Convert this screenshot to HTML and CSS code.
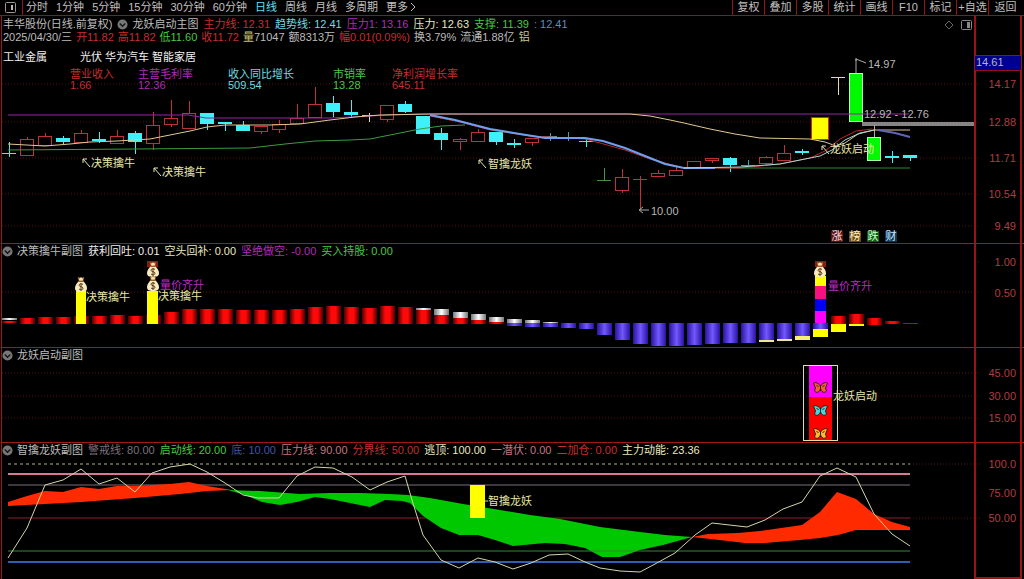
FILE: index.html
```html
<!DOCTYPE html>
<html lang="zh-CN">
<head>
    <meta charset="UTF-8">
    <meta name="viewport" content="width=device-width, initial-scale=1.0">
    <title>丰华股份 日线</title>
    <link rel="stylesheet" href="styles.css">
</head>
<body>
    <!-- shared symbols and gradients -->
    <svg class="defs" width="0" height="0" aria-hidden="true">
        <defs>
            <linearGradient id="redBar"><stop offset="0" stop-color="#500000"/><stop offset=".35" stop-color="#ff0808"/><stop offset=".65" stop-color="#ff0808"/><stop offset="1" stop-color="#500000"/></linearGradient>
            <linearGradient id="purpleBar"><stop offset="0" stop-color="#2c12a0"/><stop offset=".5" stop-color="#7058ff"/><stop offset="1" stop-color="#2c12a0"/></linearGradient>
            <linearGradient id="whiteBar"><stop offset="0" stop-color="#777"/><stop offset=".5" stop-color="#fff"/><stop offset="1" stop-color="#777"/></linearGradient>
            <symbol id="bag" viewBox="0 0 12 15">
                <path d="M3 0l1.500 1L6 0l1.500 1L9 0 8 4H4z" fill="#f4e2a8" stroke="#7a4a20" stroke-width=".6"/>
                <path d="M4 4h4c2 2 4 4 4 7 0 3-2 4-6 4s-6-1-6-4c0-3 2-5 4-7z" fill="#f7ecc0"/>
                <path d="M3.500 4.500h5" stroke="#9a5a20"/>
                <path d="M8 7.500C7 6.500 4 6.500 4 8.300S8 9.300 8 11.200 5 13 4 12M6 6v8" fill="none" stroke="#5a3a18"/>
            </symbol>
            <symbol id="butterfly" viewBox="0 0 14 11">
                <path d="M7 4C5 1 2 0 0 1l2 5-1 3c2 2 4 2 6-2 2 4 4 4 6 2l-1-3 2-5c-2-1-5 0-7 3z" fill="currentColor" stroke="#33200c"/>
                <path d="M7 3v6M3 3l2 2M11 3L9 5" stroke="#33200c" fill="none"/>
            </symbol>
            <symbol id="pointer" viewBox="0 0 9 10">
                <path d="M8 9L1 1M1 5V1h4" fill="none" stroke="#e6e6b4"/>
            </symbol>
            <symbol id="chevron" viewBox="0 0 12 12">
                <circle cx="6" cy="6" r="5.500" fill="#777"/>
                <path d="M3 5l3 3 3-3" fill="none" stroke="#161616" stroke-width="1.500"/>
            </symbol>
        </defs>
    </svg>

    <header class="toolbar">
        <button class="layout-btn" aria-label="布局"><svg width="12" height="11" viewBox="0 0 12 11"><rect x=".5" y=".5" width="10" height="10" rx="1" fill="none" stroke="#999"/><path d="M7 3v5" stroke="#bbb" stroke-width="2"/></svg></button>
        <nav class="periods">
            <button>分时</button>
            <button>1分钟</button>
            <button>5分钟</button>
            <button>15分钟</button>
            <button>30分钟</button>
            <button>60分钟</button>
            <button class="active">日线</button>
            <button>周线</button>
            <button>月线</button>
            <button>多周期</button>
            <button>更多<svg width="8" height="8" viewBox="0 0 8 8"><path d="M3 0l4 4-4 4" fill="none" stroke="#bbb"/></svg></button>
        </nav>
        <div class="tools">
            <button>复权</button>
            <button>叠加</button>
            <button>多股</button>
            <button>统计</button>
            <button>画线</button>
            <button>F10</button>
            <button>标记</button>
            <button>+自选</button>
            <button>返回</button>
        </div>
    </header>

    <main>
        <section class="panel">
            <svg class="chart" id="main" viewBox="0 16 1024 227">
                <g class="grid"><path d="M2 84H980M2 122H980M2 158H980M2 194H980M2 226H980"/></g>
                <rect x="862" y="122" width="112" height="4" fill="#858585"/>
                <g class="candles"></g>
                <g class="lines">
                    <path stroke="#9a22a8" d="M8 115H188L206 118H330L390 115 420 114H909"/>
                    <path stroke="#3c9c3c" d="M8 150L135 149 250 148 285 144 315 141 350 140 370 139 395 134 420 129 441 126 465 125"/>
                    <path stroke="#2a8a2a" d="M684 168H910"/>
                    <path stroke="#e0c890" d="M8 144L45 146 70 144 90 142 117 141 150 139 170 135 190 131 207 127 225 125 270 125 300 124 330 120 355 117 380 115 430 114H630L650 116 670 120 684 123 710 129 735 134 760 138 810 139 825 142 836 146 845 143 858 134 874 130H910"/>
                    <path stroke="#c02828" d="M430 116L460 122 490 130 530 136 585 139 600 143 625 150 650 159 684 168 740 168 780 164 810 158 825 151 840 139 856 131 872 129"/>
                    <path stroke="#6fa0f0" stroke-width="2" d="M430 115L455 120 490 129 520 134 545 138 585 138 603 141 625 148 645 156 665 164 684 168H715"/>
                    <path stroke="#a8d8d8" d="M684 168L740 167 780 164 800 160 820 156 832 150 845 140 860 133 874 130"/>
                    <path stroke="#6264b8" stroke-width="2" d="M878 130L895 133 910 137"/>
                </g>
                <g class="marks">
                    <path d="M856 58V73M856 61V59L866 63M640 210H649M639 210L643 207M639 210L643 213" fill="none" stroke="#aaa"/>
                    <text class="plain" x="868" y="68">14.97</text>
                    <text class="plain" x="864" y="118">12.92 - 12.76</text>
                    <text class="plain" x="651" y="215">10.00</text>
                    <use href="#pointer" x="82" y="158" width="9" height="10"/>
                    <text x="91" y="167">决策擒牛</text>
                    <use href="#pointer" x="153" y="167" width="9" height="10"/>
                    <text x="162" y="176">决策擒牛</text>
                    <use href="#pointer" x="478" y="159" width="9" height="10"/>
                    <text x="488" y="168">智擒龙妖</text>
                    <use href="#pointer" x="821" y="145" width="9" height="10"/>
                    <text x="830" y="153">龙妖启动</text>
                </g>
                <g class="badges">
                    <rect x="831" y="231" width="12" height="11" fill="#5a1010"/><text x="837" y="240" fill="#ffe0e0">涨</text>
                    <rect x="849" y="231" width="12" height="11" fill="#6a4a18"/><text x="855" y="240" fill="#fff0c0">榜</text>
                    <rect x="867" y="231" width="12" height="11" fill="#0c5c14"/><text x="873" y="240" fill="#c8ffc8">跌</text>
                    <rect x="885" y="231" width="12" height="11" fill="#0c3454"/><text x="891" y="240" fill="#c8e8ff">财</text>
                </g>
                <g class="frame"><path d="M975 16V243M1021 16V243"/></g>
                <rect x="975" y="56" width="46" height="14" fill="#000090"/>
                <path d="M975 55.500H1021M975 70.500H1021" stroke="#901020"/>
                <text class="plain" x="976" y="66">14.61</text>
                <g class="axis">
                    <text x="1016" y="88">14.17</text>
                    <text x="1016" y="126">12.88</text>
                    <text x="1016" y="162">11.71</text>
                    <text x="1016" y="198">10.54</text>
                    <text x="1016" y="230">9.49</text>
                </g>
                <path d="M949 21L953 25 949 29 945 25Z" fill="none" stroke="#666"/>
                <rect x="961.500" y="20.500" width="10" height="9" rx="1" fill="none" stroke="#888"/>
                <rect x="967" y="22" width="3" height="6" fill="#888"/>
            </svg>
            <div class="legend main-legend">
                <div class="row">
                    <span class="grey">丰华股份(日线.前复权)</span>
                    <svg class="chev"><use href="#chevron"/></svg>
                    <span class="grey">龙妖启动主图</span>
                    <span class="red">主力线: 12.31</span>
                    <span class="cyan">趋势线: 12.41</span>
                    <span class="magenta">压力1: 13.16</span>
                    <span class="cream">压力: 12.63</span>
                    <span class="green">支撑: 11.39</span>
                    <span class="blue">: 12.41</span>
                </div>
                <div class="row quote">
                    <span class="grey">2025/04/30/三</span>
                    <span class="red">开11.82</span>
                    <span class="red">高11.82</span>
                    <span class="green">低11.60</span>
                    <span class="red">收11.72</span>
                    <span class="grey"><b>量</b>71047</span>
                    <span class="grey">额8313万</span>
                    <span class="red">幅0.01(0.09%)</span>
                    <span class="grey">换3.79%</span>
                    <span class="grey">流通1.88亿</span>
                    <span class="khaki">铝</span>
                </div>
                <div class="row sector">
                    <span>工业金属</span>
                    <span>光伏 华为汽车 智能家居</span>
                </div>
                <dl class="figures">
                    <div class="red"><dt>营业收入</dt><dd>1.66</dd></div>
                    <div class="magenta"><dt>主营毛利率</dt><dd>12.36</dd></div>
                    <div class="cyan"><dt>收入同比增长</dt><dd>509.54</dd></div>
                    <div class="green"><dt>市销率</dt><dd>13.28</dd></div>
                    <div class="red"><dt>净利润增长率</dt><dd>645.11</dd></div>
                </dl>
            </div>
        </section>

        <section class="panel">
            <svg class="chart" id="volume" viewBox="0 244 1024 103">
                <g class="grid"><path d="M2 292H980M975 262H980"/></g>
                <g class="bars"></g>
                <g class="signals">
                    <rect x="76" y="291" width="10" height="33" fill="#ff0"/>
                    <rect x="147" y="291" width="11" height="33" fill="#ff0"/>
                    <rect x="147" y="261" width="11" height="6" fill="#8a1c10"/>
                    <rect x="815" y="261" width="11" height="6" fill="#8a1c10"/>
                    <rect x="815" y="276" width="11" height="10" fill="#ff0"/>
                    <rect x="815" y="286" width="11" height="13" fill="#f81080"/>
                    <rect x="815" y="299" width="11" height="12" fill="#0000f0"/>
                    <rect x="815" y="311" width="11" height="12" fill="#f0f"/>
                    <use href="#bag" x="75" y="277" width="12" height="15"/>
                    <use href="#bag" x="147" y="262" width="12" height="15"/>
                    <use href="#bag" x="147" y="276" width="12" height="15"/>
                    <use href="#bag" x="814" y="262" width="12" height="15"/>
                </g>
                <g class="marks">
                    <text x="86" y="301">决策擒牛</text>
                    <text class="violet" x="160" y="289">量价齐升</text>
                    <text x="158" y="300">决策擒牛</text>
                    <text class="violet" x="828" y="290">量价齐升</text>
                </g>
                <g class="frame"><path d="M975 244V347M1021 244V347"/></g>
                <g class="axis">
                    <text x="1016" y="266">1.00</text>
                    <text x="1016" y="297">0.50</text>
                </g>
            </svg>
            <div class="legend row">
                <svg class="chev"><use href="#chevron"/></svg>
                <span class="grey">决策擒牛副图</span>
                <span class="white">获利回吐: 0.01</span>
                <span class="cream">空头回补: 0.00</span>
                <span class="magenta">坚绝做空: -0.00</span>
                <span class="green">买入持股: 0.00</span>
            </div>
        </section>

        <section class="panel">
            <svg class="chart" viewBox="0 348 1024 94">
                <g class="grid"><path d="M2 373H980M2 396H980M2 418H980"/></g>
                <rect x="809" y="365" width="23" height="32" fill="#f0f"/>
                <rect x="809" y="397" width="23" height="44" fill="#f00"/>
                <rect x="803.500" y="365.500" width="34" height="75" fill="none" stroke="#e0e0a0"/>
                <use class="bf-red" href="#butterfly" x="813" y="382" width="15" height="11"/>
                <use class="bf-cyan" href="#butterfly" x="813" y="405" width="15" height="11"/>
                <use class="bf-gold" href="#butterfly" x="813" y="428" width="15" height="11"/>
                <g class="marks"><text x="833" y="400">龙妖启动</text></g>
                <g class="frame"><path d="M975 348V442M1021 348V442"/></g>
                <g class="axis">
                    <text x="1016" y="377">45.00</text>
                    <text x="1016" y="400">30.00</text>
                    <text x="1016" y="422">15.00</text>
                </g>
            </svg>
            <div class="legend row">
                <svg class="chev"><use href="#chevron"/></svg>
                <span class="grey">龙妖启动副图</span>
            </div>
        </section>

        <section class="panel">
            <svg class="chart" viewBox="0 443 1024 136">
                <g class="grid"><path d="M910 464H980M910 518H980"/></g>
                <g class="levels">
                    <path stroke="#7c707c" d="M8 485H910"/>
                    <path stroke="#8c2028" d="M8 518H910"/>
                </g>
                <path fill="#ff2a00" d="M8 502L27 496 45 491 63 492 81 487 99 489 117 486 135 486 170 484 189 482 207 486 232 490 207 491 180 494 135 498 81 502 45 504 8 506Z"/>
                <path fill="#00c800" d="M228 490L260 491 300 494 330 493 360 493 390 494 408 495 430 498 463 504 500 510 530 515 560 519 600 527 640 532 665 535 692 537 663 545 640 550 620 557 602 557 585 548 565 544 545 543 513 546 495 540 478 535 459 535 441 528 423 516 410 503 402 501 385 500 370 507 350 503 330 499 315 497 297 502 280 505 262 502 245 495Z"/>
                <path fill="#ff2a00" d="M692 537L708 534 738 533 760 531 802 525 820 512 837 492 856 499 874 514 892 522 910 527V530H856L838 535 820 538 800 540 765 543H745L728 541Z"/>
                <g class="levels">
                    <path stroke="#a8b890" stroke-dasharray="3 3" d="M8 464H910"/>
                    <path stroke="#d87898" stroke-width="2" d="M8 474H910"/>
                    <path stroke="#388838" d="M8 551H910"/>
                    <path stroke="#2c60b0" stroke-width="2" d="M8 562H910"/>
                    <path stroke="#d4d4a8" d="M8 558L27 528 45 485 63 480 81 469 99 484 117 478 135 492 152 473 170 467 190 464 207 472 225 483 243 495 258 498H279L297 476 315 467 333 468 352 477 370 490 387 482 405 476 412 500 423 535 441 560 459 568 478 558 495 562 513 569 531 563 549 555 568 554 585 562 600 568 620 571 640 572 655 564 675 553 695 535 712 523 747 527 765 520 783 509 802 502 820 476 837 468 856 477 874 514 892 534 910 546"/>
                </g>
                <rect x="470" y="485" width="15" height="33" fill="#ff0"/>
                <path d="M485 501H488" stroke="#d4d4a8"/>
                <g class="marks"><text x="488" y="505">智擒龙妖</text></g>
                <g class="frame"><path d="M975 443V579M1021 443V579M975 578H1021"/></g>
                <g class="axis">
                    <text x="1016" y="468">100.0</text>
                    <text x="1016" y="497">75.00</text>
                    <text x="1016" y="522">50.00</text>
                </g>
            </svg>
            <div class="legend row">
                <svg class="chev"><use href="#chevron"/></svg>
                <span class="grey">智擒龙妖副图</span>
                <span class="dim">警戒线: 80.00</span>
                <span class="green">启动线: 20.00</span>
                <span class="navy">底: 10.00</span>
                <span class="pink">压力线: 90.00</span>
                <span class="red">分界线: 50.00</span>
                <span class="cream">逃顶: 100.00</span>
                <span class="pink">一潜伏: 0.00</span>
                <span class="red">二加仓: 0.00</span>
                <span class="cream">主力动能: 23.36</span>
            </div>
        </section>
    </main>

    <script src="script.js"></script>
</body>
</html>
```
FILE: styles.css
```css
* {
    margin: 0;
    padding: 0;
    box-sizing: border-box;
}

body {
    background-color: #000;
    color: #c0c0c0;
    font-family: "Liberation Sans", "Noto Sans CJK SC", sans-serif;
    font-size: 11px;
    line-height: 13px;
}

button {
    background: none;
    border: none;
    color: inherit;
    font: inherit;
    white-space: nowrap;
    cursor: pointer;
}

.defs {
    position: absolute;
}

/* top bar */
.toolbar {
    display: flex;
    height: 16px;
    border-bottom: 1px solid #8c161c;
}

.layout-btn {
    display: flex;
    align-items: center;
    width: 23px;
    padding-left: 5px;
    border-right: 1px solid #8c161c;
}

.periods {
    display: flex;
    gap: 8px;
    padding-left: 3px;
}

.periods .active {
    color: #5fe0f0;
}

.tools {
    display: flex;
    margin-left: auto;
    padding-right: 2px;
}

.tools button {
    width: 32px;
    border-left: 1px solid #8c161c;
}

.tools button:last-child {
    width: 34px;
}

/* chart panels: the legend shares one grid cell with the chart */
.panel {
    display: grid;
    border-left: 1px solid #a0181e;
    margin-left: 1px;
}

.panel + .panel {
    border-top: 1px solid #a0181e;
}

.panel > * {
    grid-area: 1 / 1;
}

.chart {
    display: block;
    width: calc(100% + 2px);
    margin-left: -2px;
    height: auto;
}

.legend {
    align-self: start;
    padding-top: 1px;
}

.main-legend {
    padding: 2px 0 0 1px;
}

.row {
    display: flex;
    align-items: center;
    gap: 5px;
    white-space: nowrap;
}

.row.quote {
    gap: 4px;
}

.quote b {
    color: #c8c070;
    font-weight: normal;
}

.chev {
    width: 11px;
    height: 11px;
    margin-right: -1px;
}

.row.sector {
    gap: 33px;
    margin-top: 7px;
    color: #f0f0f0;
}

.figures {
    display: grid;
    grid-template-columns: 68px 90px 105px 59px auto;
    margin-top: 5px;
    padding-left: 67px;
    line-height: 11px;
}

.grey { color: #bcbcbc; }
.white { color: #f0f0f0; }
.cream { color: #e8e8c0; }
.khaki { color: #c8c890; }
.red { color: #c82c30; }
.cyan { color: #6fdce0; }
.magenta { color: #b02cb8; }
.green { color: #48c848; }
.blue { color: #5c8cc0; }
.navy { color: #4054a8; }
.dim { color: #7c707c; }
.pink { color: #c07884; }

/* svg parts */
.chart text {
    font-size: 11px;
}

.grid path {
    stroke: #501414;
    stroke-dasharray: 1 2;
    fill: none;
}

.frame path {
    stroke: #981418;
    stroke-width: 2;
    fill: none;
}

.axis text {
    fill: #b03c40;
    text-anchor: end;
}

.marks text {
    fill: #e6e6a8;
}

.chart text.plain {
    fill: #b8b8b8;
}

.marks text.violet {
    fill: #b42cc0;
}

.badges text {
    text-anchor: middle;
}

.lines path,
.levels path {
    fill: none;
}

.bf-red { color: #f06030; }
.bf-cyan { color: #40d8e8; }
.bf-gold { color: #ffb830; }
```
FILE: script.js
```js
const SVG = 'http://www.w3.org/2000/svg';
const CYAN = '#40f0f8';
const RED = '#c03038';

function rect(parent, x, y, width, height, fill, stroke) {
    const el = document.createElementNS(SVG, 'rect');
    const attrs = { x, y, width, height, fill };
    if (stroke) attrs.stroke = stroke;
    for (const key in attrs) el.setAttribute(key, attrs[key]);
    parent.appendChild(el);
}

function center(i) {
    return Math.round(9 + i * 18.02);
}

// type, body top, body bottom, wick top, wick bottom
// u = up, d = down, c/r/g/w/t = flat bar in cyan/red/green/cream/teal
const candles = [
    ['c', 153, 154, 142, 157], ['u', 139, 155, 137, 155], ['u', 136, 145, 133, 145],
    ['d', 138, 142, 136, 144], ['u', 133, 142, 130, 142], ['c', 139, 141, 132, 143],
    ['u', 136, 143, 130, 144], ['d', 133, 142, 131, 154], ['u', 125, 143, 112, 150],
    ['u', 118, 124, 100, 127], ['u', 113, 128, 101, 128], ['d', 113, 124, 113, 130],
    ['c', 122, 124, 122, 131], ['d', 125, 131, 121, 131], ['u', 126, 131, 126, 134],
    ['u', 124, 129, 120, 133], ['u', 118, 123, 104, 124], ['u', 104, 117, 87, 117],
    ['d', 103, 112, 96, 117], ['d', 112, 115, 100, 117], ['w', 115, 116, 113, 122],
    ['u', 105, 119, 105, 122], ['d', 104, 112, 101, 113], ['d', 116, 134, 116, 134],
    ['d', 133, 140, 128, 150], ['u', 139, 141, 138, 150], ['u', 132, 141, 129, 142],
    ['d', 132, 142, 132, 145], ['c', 143, 145, 139, 148], ['u', 138, 142, 138, 146],
    ['t', 136, 137, 133, 141], ['t', 137, 138, 132, 141], ['c', 141, 142, 139, 147],
    ['g', 180, 181, 168, 180], ['u', 177, 190, 169, 193], ['r', 179, 180, 176, 210],
    ['u', 173, 176, 170, 176], ['u', 170, 175, 167, 175], ['u', 161, 168, 161, 168],
    ['u', 158, 160, 158, 163], ['d', 158, 165, 157, 172], ['t', 165, 166, 160, 166],
    ['u', 157, 163, 156, 166], ['u', 153, 160, 145, 161], ['c', 151, 153, 149, 155],
    ['y', 117, 139, 117, 139], ['w', 77, 78, 77, 95], ['s', 73, 121, 73, 121],
    ['s', 137, 160, 125, 160], ['c', 156, 158, 151, 163], ['c', 155, 158, 155, 161]
];

const flatColors = { c: CYAN, r: RED, g: '#489048', w: '#e8d8b0', t: '#4c9ca4' };

const candleLayer = document.querySelector('#main .candles');
candles.forEach(([type, top, bottom, high, low], i) => {
    const x = center(i);
    if (type === 'u') {
        rect(candleLayer, x, high, 1, top - high, RED);
        rect(candleLayer, x, bottom, 1, low - bottom, RED);
        rect(candleLayer, x - 6.5, top + 0.5, 13, bottom - top, 'none', RED);
    } else if (type === 'd') {
        rect(candleLayer, x, high, 1, low - high, CYAN);
        rect(candleLayer, x - 7, top, 14, bottom - top, CYAN);
    } else if (type === 's') {
        rect(candleLayer, x, high, 1, low - high, '#aaa');
        rect(candleLayer, x - 6.5, top + 0.5, 13, bottom - top, '#00f800', '#b0ffb0');
    } else if (type === 'y') {
        rect(candleLayer, x - 8.5, top + 0.5, 17, bottom - top, '#ff0', '#e02800');
    } else {
        rect(candleLayer, x, high, 1, low - high, flatColors[type]);
        rect(candleLayer, x - 7, top, 14, bottom - top, flatColors[type]);
    }
});

// segments per day: color, top, bottom
const R = 'url(#redBar)';
const P = 'url(#purpleBar)';
const W = 'url(#whiteBar)';
const Y = '#ff0';
const bars = [
    [[W, 318, 320], [R, 321, 323]], [[R, 318, 324]], [[R, 317, 324]], [[R, 317, 324]],
    [[R, 316, 324]], [[R, 316, 324]], [[R, 315, 324]], [[R, 316, 324]],
    [[R, 315, 324]], [[R, 312, 324]], [[R, 309, 324]], [[R, 309, 324]],
    [[R, 309, 324]], [[R, 310, 324]], [[R, 310, 324]], [[R, 310, 324]],
    [[R, 309, 324]], [[R, 307, 324]], [[R, 306, 324]], [[R, 307, 324]],
    [[R, 308, 324]], [[R, 306, 324]], [[R, 307, 324]], [[W, 308, 310], [R, 310, 324]],
    [[W, 309, 315], [R, 315, 324]], [[W, 312, 318], [R, 318, 324]],
    [[W, 314, 320], [R, 320, 324]], [[W, 317, 322], [R, 322, 324]],
    [[W, 319, 323], [P, 323, 326]], [[W, 320, 323], [P, 323, 327]],
    [[W, 322, 323], [P, 323, 327]], [[P, 323, 328]], [[P, 323, 329]], [[P, 323, 335]],
    [[P, 323, 340]], [[P, 323, 344]], [[P, 323, 346]], [[P, 323, 346]],
    [[P, 323, 345]], [[P, 323, 344]], [[P, 323, 343]], [[P, 323, 343]],
    [[P, 323, 340], ['#f0e890', 340, 342]], [[P, 323, 339], ['#f0e890', 339, 341]],
    [[P, 323, 336], ['#f8f070', 336, 340]], [[P, 323, 329], [Y, 329, 337]],
    [[R, 316, 324], [Y, 324, 332]], [[R, 314, 324], [Y, 324, 326]],
    [[R, 318, 325]], [[R, 321, 324]], [['#2838a0', 323, 324]]
];

const barLayer = document.querySelector('#volume .bars');
bars.forEach((segments, i) => {
    segments.forEach(([fill, top, bottom]) => {
        rect(barLayer, center(i) - 7, top, 15, bottom - top, fill);
    });
});
```
